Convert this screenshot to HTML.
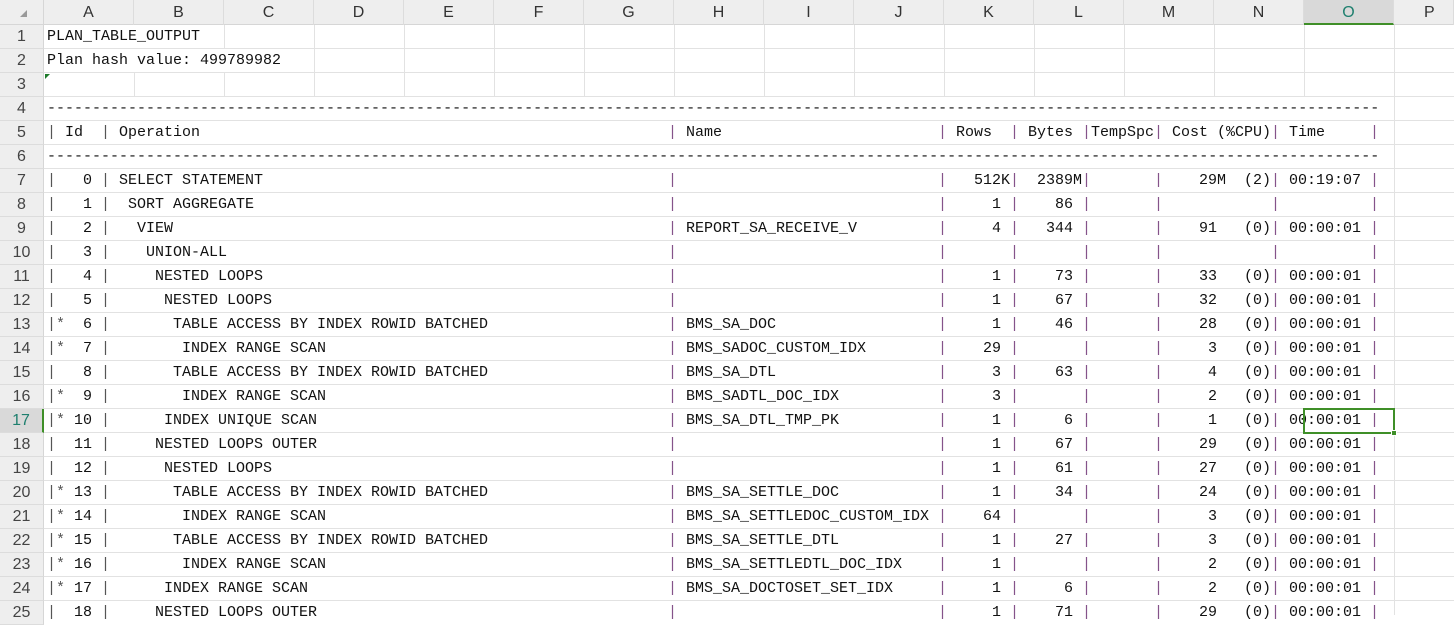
<!DOCTYPE html>
<html><head><meta charset="utf-8"><style>
*{margin:0;padding:0;box-sizing:border-box}
body{width:1454px;height:615px;overflow:hidden;background:#fff;position:relative;font-family:"Liberation Mono",monospace;font-size:15px;color:#111}
.hd{position:absolute;top:0;left:0;width:1454px;height:25px;background:#eeeeee;border-bottom:1px solid #d6d6d6}
.ch{position:absolute;top:0;height:25px;line-height:25px;text-align:center;font-family:"Liberation Sans",sans-serif;font-size:16px;color:#333;border-right:1px solid #dcdcdc}
.rh{position:absolute;left:0;width:44px;height:24px;line-height:24px;text-align:center;background:#eeeeee;font-family:"Liberation Sans",sans-serif;font-size:16px;color:#444;border-bottom:1px solid #dcdcdc;border-right:1px solid #d6d6d6}
.hl{position:absolute;left:44px;width:1410px;height:1px;background:#e2e2e2}
.vl{position:absolute;width:1px;background:#e2e2e2}
.r{position:absolute;left:0;width:1454px;height:24px;line-height:24px;white-space:pre}
.r span{position:absolute;top:0}
.p{color:#555}
.q{color:#85538a}
.ra{text-align:right}
</style></head><body>
<div class="hd"></div>
<div style="position:absolute;left:0;top:0;width:44px;height:25px;border-right:1px solid #d6d6d6"></div>
<div style="position:absolute;left:20px;top:10px;width:0;height:0;border-left:7px solid transparent;border-bottom:7px solid #999"></div>
<div class="ch" style="left:44px;width:90px">A</div>
<div class="ch" style="left:134px;width:90px">B</div>
<div class="ch" style="left:224px;width:90px">C</div>
<div class="ch" style="left:314px;width:90px">D</div>
<div class="ch" style="left:404px;width:90px">E</div>
<div class="ch" style="left:494px;width:90px">F</div>
<div class="ch" style="left:584px;width:90px">G</div>
<div class="ch" style="left:674px;width:90px">H</div>
<div class="ch" style="left:764px;width:90px">I</div>
<div class="ch" style="left:854px;width:90px">J</div>
<div class="ch" style="left:944px;width:90px">K</div>
<div class="ch" style="left:1034px;width:90px">L</div>
<div class="ch" style="left:1124px;width:90px">M</div>
<div class="ch" style="left:1214px;width:90px">N</div>
<div class="ch" style="left:1304px;width:90px;background:#d9d9d9;color:#1e7f6e;border-bottom:2px solid #3f8f28">O</div>
<div class="ch" style="left:1394px;width:60px;text-align:left;padding-left:30px">P</div>

<!-- row headers -->
<div class="rh" style="top:25px">1</div><div class="rh" style="top:49px">2</div><div class="rh" style="top:73px">3</div><div class="rh" style="top:97px">4</div><div class="rh" style="top:121px">5</div><div class="rh" style="top:145px">6</div><div class="rh" style="top:169px">7</div><div class="rh" style="top:193px">8</div><div class="rh" style="top:217px">9</div><div class="rh" style="top:241px">10</div><div class="rh" style="top:265px">11</div><div class="rh" style="top:289px">12</div><div class="rh" style="top:313px">13</div><div class="rh" style="top:337px">14</div><div class="rh" style="top:361px">15</div><div class="rh" style="top:385px">16</div><div class="rh" style="top:409px;background:#d9d9d9;color:#1e7f6e;border-right:2px solid #3f8f28">17</div><div class="rh" style="top:433px">18</div><div class="rh" style="top:457px">19</div><div class="rh" style="top:481px">20</div><div class="rh" style="top:505px">21</div><div class="rh" style="top:529px">22</div><div class="rh" style="top:553px">23</div><div class="rh" style="top:577px">24</div><div class="rh" style="top:601px">25</div>

<!-- horizontal gridlines -->
<div class="hl" style="top:48px"></div><div class="hl" style="top:72px"></div><div class="hl" style="top:96px"></div><div class="hl" style="top:120px"></div><div class="hl" style="top:144px"></div><div class="hl" style="top:168px"></div><div class="hl" style="top:192px"></div><div class="hl" style="top:216px"></div><div class="hl" style="top:240px"></div><div class="hl" style="top:264px"></div><div class="hl" style="top:288px"></div><div class="hl" style="top:312px"></div><div class="hl" style="top:336px"></div><div class="hl" style="top:360px"></div><div class="hl" style="top:384px"></div><div class="hl" style="top:408px"></div><div class="hl" style="top:432px"></div><div class="hl" style="top:456px"></div><div class="hl" style="top:480px"></div><div class="hl" style="top:504px"></div><div class="hl" style="top:528px"></div><div class="hl" style="top:552px"></div><div class="hl" style="top:576px"></div><div class="hl" style="top:600px"></div>

<!-- vertical gridlines rows 1-3 -->
<div class="vl" style="left:224px;top:25px;height:24px"></div>
<div class="vl" style="left:134px;top:73px;height:24px"></div>
<div class="vl" style="left:224px;top:73px;height:24px"></div>
<div class="vl" style="left:314px;top:25px;height:72px"></div>
<div class="vl" style="left:404px;top:25px;height:72px"></div>
<div class="vl" style="left:494px;top:25px;height:72px"></div>
<div class="vl" style="left:584px;top:25px;height:72px"></div>
<div class="vl" style="left:674px;top:25px;height:72px"></div>
<div class="vl" style="left:764px;top:25px;height:72px"></div>
<div class="vl" style="left:854px;top:25px;height:72px"></div>
<div class="vl" style="left:944px;top:25px;height:72px"></div>
<div class="vl" style="left:1034px;top:25px;height:72px"></div>
<div class="vl" style="left:1124px;top:25px;height:72px"></div>
<div class="vl" style="left:1214px;top:25px;height:72px"></div>
<div class="vl" style="left:1304px;top:25px;height:72px"></div>
<div class="vl" style="left:1394px;top:25px;height:590px"></div>
<div style="position:absolute;left:45px;top:74px;width:0;height:0;border-top:5px solid #1d7a2a;border-right:5px solid transparent"></div>

<div class="r" style="top:25px"><span style="left:47px">PLAN_TABLE_OUTPUT</span></div>
<div class="r" style="top:49px"><span style="left:47px">Plan hash value: 499789982</span></div>
<div class="r" style="top:97px"><span style="left:47px">----------------------------------------------------------------------------------------------------------------------------------------------------</span></div>
<div class="r" style="top:121px"><span class="p" style="left:47px">|</span><span style="left:65px">Id</span><span class="p" style="left:101px">|</span><span style="left:119px">Operation</span><span class="q" style="left:668px">|</span><span style="left:686px">Name</span><span class="q" style="left:938px">|</span><span style="left:956px">Rows</span><span class="q" style="left:1010px">|</span><span style="left:1028px">Bytes</span><span class="q" style="left:1082px">|</span><span style="left:1091px">TempSpc</span><span class="q" style="left:1154px">|</span><span style="left:1172px">Cost (%CPU)</span><span class="q" style="left:1271px">|</span><span style="left:1289px">Time</span><span class="q" style="left:1370px">|</span></div>
<div class="r" style="top:145px"><span style="left:47px">----------------------------------------------------------------------------------------------------------------------------------------------------</span></div>

<div id="rows"></div>
<!-- data rows -->
<div class="r" style="top:169px"><span class="p" style="left:47px">|</span><span class="ra" style="right:1362px">0</span><span class="p" style="left:101px">|</span><span style="left:119px">SELECT STATEMENT</span><span class="q" style="left:668px">|</span><span class="q" style="left:938px">|</span><span class="ra" style="right:444px">512K</span><span class="q" style="left:1010px">|</span><span class="ra" style="right:372px">2389M</span><span class="q" style="left:1082px">|</span><span class="q" style="left:1154px">|</span><span class="ra" style="right:228px">29M</span><span class="ra" style="right:183px">(2)</span><span class="q" style="left:1271px">|</span><span style="left:1289px">00:19:07</span><span class="q" style="left:1370px">|</span></div>
<div class="r" style="top:193px"><span class="p" style="left:47px">|</span><span class="ra" style="right:1362px">1</span><span class="p" style="left:101px">|</span><span style="left:128px">SORT AGGREGATE</span><span class="q" style="left:668px">|</span><span class="q" style="left:938px">|</span><span class="ra" style="right:453px">1</span><span class="q" style="left:1010px">|</span><span class="ra" style="right:381px">86</span><span class="q" style="left:1082px">|</span><span class="q" style="left:1154px">|</span><span class="q" style="left:1271px">|</span><span class="q" style="left:1370px">|</span></div>
<div class="r" style="top:217px"><span class="p" style="left:47px">|</span><span class="ra" style="right:1362px">2</span><span class="p" style="left:101px">|</span><span style="left:137px">VIEW</span><span class="q" style="left:668px">|</span><span style="left:686px">REPORT_SA_RECEIVE_V</span><span class="q" style="left:938px">|</span><span class="ra" style="right:453px">4</span><span class="q" style="left:1010px">|</span><span class="ra" style="right:381px">344</span><span class="q" style="left:1082px">|</span><span class="q" style="left:1154px">|</span><span class="ra" style="right:237px">91</span><span class="ra" style="right:183px">(0)</span><span class="q" style="left:1271px">|</span><span style="left:1289px">00:00:01</span><span class="q" style="left:1370px">|</span></div>
<div class="r" style="top:241px"><span class="p" style="left:47px">|</span><span class="ra" style="right:1362px">3</span><span class="p" style="left:101px">|</span><span style="left:146px">UNION-ALL</span><span class="q" style="left:668px">|</span><span class="q" style="left:938px">|</span><span class="q" style="left:1010px">|</span><span class="q" style="left:1082px">|</span><span class="q" style="left:1154px">|</span><span class="q" style="left:1271px">|</span><span class="q" style="left:1370px">|</span></div>
<div class="r" style="top:265px"><span class="p" style="left:47px">|</span><span class="ra" style="right:1362px">4</span><span class="p" style="left:101px">|</span><span style="left:155px">NESTED LOOPS</span><span class="q" style="left:668px">|</span><span class="q" style="left:938px">|</span><span class="ra" style="right:453px">1</span><span class="q" style="left:1010px">|</span><span class="ra" style="right:381px">73</span><span class="q" style="left:1082px">|</span><span class="q" style="left:1154px">|</span><span class="ra" style="right:237px">33</span><span class="ra" style="right:183px">(0)</span><span class="q" style="left:1271px">|</span><span style="left:1289px">00:00:01</span><span class="q" style="left:1370px">|</span></div>
<div class="r" style="top:289px"><span class="p" style="left:47px">|</span><span class="ra" style="right:1362px">5</span><span class="p" style="left:101px">|</span><span style="left:164px">NESTED LOOPS</span><span class="q" style="left:668px">|</span><span class="q" style="left:938px">|</span><span class="ra" style="right:453px">1</span><span class="q" style="left:1010px">|</span><span class="ra" style="right:381px">67</span><span class="q" style="left:1082px">|</span><span class="q" style="left:1154px">|</span><span class="ra" style="right:237px">32</span><span class="ra" style="right:183px">(0)</span><span class="q" style="left:1271px">|</span><span style="left:1289px">00:00:01</span><span class="q" style="left:1370px">|</span></div>
<div class="r" style="top:313px"><span class="p" style="left:47px">|*</span><span class="ra" style="right:1362px">6</span><span class="p" style="left:101px">|</span><span style="left:173px">TABLE ACCESS BY INDEX ROWID BATCHED</span><span class="q" style="left:668px">|</span><span style="left:686px">BMS_SA_DOC</span><span class="q" style="left:938px">|</span><span class="ra" style="right:453px">1</span><span class="q" style="left:1010px">|</span><span class="ra" style="right:381px">46</span><span class="q" style="left:1082px">|</span><span class="q" style="left:1154px">|</span><span class="ra" style="right:237px">28</span><span class="ra" style="right:183px">(0)</span><span class="q" style="left:1271px">|</span><span style="left:1289px">00:00:01</span><span class="q" style="left:1370px">|</span></div>
<div class="r" style="top:337px"><span class="p" style="left:47px">|*</span><span class="ra" style="right:1362px">7</span><span class="p" style="left:101px">|</span><span style="left:182px">INDEX RANGE SCAN</span><span class="q" style="left:668px">|</span><span style="left:686px">BMS_SADOC_CUSTOM_IDX</span><span class="q" style="left:938px">|</span><span class="ra" style="right:453px">29</span><span class="q" style="left:1010px">|</span><span class="q" style="left:1082px">|</span><span class="q" style="left:1154px">|</span><span class="ra" style="right:237px">3</span><span class="ra" style="right:183px">(0)</span><span class="q" style="left:1271px">|</span><span style="left:1289px">00:00:01</span><span class="q" style="left:1370px">|</span></div>
<div class="r" style="top:361px"><span class="p" style="left:47px">|</span><span class="ra" style="right:1362px">8</span><span class="p" style="left:101px">|</span><span style="left:173px">TABLE ACCESS BY INDEX ROWID BATCHED</span><span class="q" style="left:668px">|</span><span style="left:686px">BMS_SA_DTL</span><span class="q" style="left:938px">|</span><span class="ra" style="right:453px">3</span><span class="q" style="left:1010px">|</span><span class="ra" style="right:381px">63</span><span class="q" style="left:1082px">|</span><span class="q" style="left:1154px">|</span><span class="ra" style="right:237px">4</span><span class="ra" style="right:183px">(0)</span><span class="q" style="left:1271px">|</span><span style="left:1289px">00:00:01</span><span class="q" style="left:1370px">|</span></div>
<div class="r" style="top:385px"><span class="p" style="left:47px">|*</span><span class="ra" style="right:1362px">9</span><span class="p" style="left:101px">|</span><span style="left:182px">INDEX RANGE SCAN</span><span class="q" style="left:668px">|</span><span style="left:686px">BMS_SADTL_DOC_IDX</span><span class="q" style="left:938px">|</span><span class="ra" style="right:453px">3</span><span class="q" style="left:1010px">|</span><span class="q" style="left:1082px">|</span><span class="q" style="left:1154px">|</span><span class="ra" style="right:237px">2</span><span class="ra" style="right:183px">(0)</span><span class="q" style="left:1271px">|</span><span style="left:1289px">00:00:01</span><span class="q" style="left:1370px">|</span></div>
<div class="r" style="top:409px"><span class="p" style="left:47px">|*</span><span class="ra" style="right:1362px">10</span><span class="p" style="left:101px">|</span><span style="left:164px">INDEX UNIQUE SCAN</span><span class="q" style="left:668px">|</span><span style="left:686px">BMS_SA_DTL_TMP_PK</span><span class="q" style="left:938px">|</span><span class="ra" style="right:453px">1</span><span class="q" style="left:1010px">|</span><span class="ra" style="right:381px">6</span><span class="q" style="left:1082px">|</span><span class="q" style="left:1154px">|</span><span class="ra" style="right:237px">1</span><span class="ra" style="right:183px">(0)</span><span class="q" style="left:1271px">|</span><span style="left:1289px">00:00:01</span><span class="q" style="left:1370px">|</span></div>
<div class="r" style="top:433px"><span class="p" style="left:47px">|</span><span class="ra" style="right:1362px">11</span><span class="p" style="left:101px">|</span><span style="left:155px">NESTED LOOPS OUTER</span><span class="q" style="left:668px">|</span><span class="q" style="left:938px">|</span><span class="ra" style="right:453px">1</span><span class="q" style="left:1010px">|</span><span class="ra" style="right:381px">67</span><span class="q" style="left:1082px">|</span><span class="q" style="left:1154px">|</span><span class="ra" style="right:237px">29</span><span class="ra" style="right:183px">(0)</span><span class="q" style="left:1271px">|</span><span style="left:1289px">00:00:01</span><span class="q" style="left:1370px">|</span></div>
<div class="r" style="top:457px"><span class="p" style="left:47px">|</span><span class="ra" style="right:1362px">12</span><span class="p" style="left:101px">|</span><span style="left:164px">NESTED LOOPS</span><span class="q" style="left:668px">|</span><span class="q" style="left:938px">|</span><span class="ra" style="right:453px">1</span><span class="q" style="left:1010px">|</span><span class="ra" style="right:381px">61</span><span class="q" style="left:1082px">|</span><span class="q" style="left:1154px">|</span><span class="ra" style="right:237px">27</span><span class="ra" style="right:183px">(0)</span><span class="q" style="left:1271px">|</span><span style="left:1289px">00:00:01</span><span class="q" style="left:1370px">|</span></div>
<div class="r" style="top:481px"><span class="p" style="left:47px">|*</span><span class="ra" style="right:1362px">13</span><span class="p" style="left:101px">|</span><span style="left:173px">TABLE ACCESS BY INDEX ROWID BATCHED</span><span class="q" style="left:668px">|</span><span style="left:686px">BMS_SA_SETTLE_DOC</span><span class="q" style="left:938px">|</span><span class="ra" style="right:453px">1</span><span class="q" style="left:1010px">|</span><span class="ra" style="right:381px">34</span><span class="q" style="left:1082px">|</span><span class="q" style="left:1154px">|</span><span class="ra" style="right:237px">24</span><span class="ra" style="right:183px">(0)</span><span class="q" style="left:1271px">|</span><span style="left:1289px">00:00:01</span><span class="q" style="left:1370px">|</span></div>
<div class="r" style="top:505px"><span class="p" style="left:47px">|*</span><span class="ra" style="right:1362px">14</span><span class="p" style="left:101px">|</span><span style="left:182px">INDEX RANGE SCAN</span><span class="q" style="left:668px">|</span><span style="left:686px">BMS_SA_SETTLEDOC_CUSTOM_IDX</span><span class="q" style="left:938px">|</span><span class="ra" style="right:453px">64</span><span class="q" style="left:1010px">|</span><span class="q" style="left:1082px">|</span><span class="q" style="left:1154px">|</span><span class="ra" style="right:237px">3</span><span class="ra" style="right:183px">(0)</span><span class="q" style="left:1271px">|</span><span style="left:1289px">00:00:01</span><span class="q" style="left:1370px">|</span></div>
<div class="r" style="top:529px"><span class="p" style="left:47px">|*</span><span class="ra" style="right:1362px">15</span><span class="p" style="left:101px">|</span><span style="left:173px">TABLE ACCESS BY INDEX ROWID BATCHED</span><span class="q" style="left:668px">|</span><span style="left:686px">BMS_SA_SETTLE_DTL</span><span class="q" style="left:938px">|</span><span class="ra" style="right:453px">1</span><span class="q" style="left:1010px">|</span><span class="ra" style="right:381px">27</span><span class="q" style="left:1082px">|</span><span class="q" style="left:1154px">|</span><span class="ra" style="right:237px">3</span><span class="ra" style="right:183px">(0)</span><span class="q" style="left:1271px">|</span><span style="left:1289px">00:00:01</span><span class="q" style="left:1370px">|</span></div>
<div class="r" style="top:553px"><span class="p" style="left:47px">|*</span><span class="ra" style="right:1362px">16</span><span class="p" style="left:101px">|</span><span style="left:182px">INDEX RANGE SCAN</span><span class="q" style="left:668px">|</span><span style="left:686px">BMS_SA_SETTLEDTL_DOC_IDX</span><span class="q" style="left:938px">|</span><span class="ra" style="right:453px">1</span><span class="q" style="left:1010px">|</span><span class="q" style="left:1082px">|</span><span class="q" style="left:1154px">|</span><span class="ra" style="right:237px">2</span><span class="ra" style="right:183px">(0)</span><span class="q" style="left:1271px">|</span><span style="left:1289px">00:00:01</span><span class="q" style="left:1370px">|</span></div>
<div class="r" style="top:577px"><span class="p" style="left:47px">|*</span><span class="ra" style="right:1362px">17</span><span class="p" style="left:101px">|</span><span style="left:164px">INDEX RANGE SCAN</span><span class="q" style="left:668px">|</span><span style="left:686px">BMS_SA_DOCTOSET_SET_IDX</span><span class="q" style="left:938px">|</span><span class="ra" style="right:453px">1</span><span class="q" style="left:1010px">|</span><span class="ra" style="right:381px">6</span><span class="q" style="left:1082px">|</span><span class="q" style="left:1154px">|</span><span class="ra" style="right:237px">2</span><span class="ra" style="right:183px">(0)</span><span class="q" style="left:1271px">|</span><span style="left:1289px">00:00:01</span><span class="q" style="left:1370px">|</span></div>
<div class="r" style="top:601px"><span class="p" style="left:47px">|</span><span class="ra" style="right:1362px">18</span><span class="p" style="left:101px">|</span><span style="left:155px">NESTED LOOPS OUTER</span><span class="q" style="left:668px">|</span><span class="q" style="left:938px">|</span><span class="ra" style="right:453px">1</span><span class="q" style="left:1010px">|</span><span class="ra" style="right:381px">71</span><span class="q" style="left:1082px">|</span><span class="q" style="left:1154px">|</span><span class="ra" style="right:237px">29</span><span class="ra" style="right:183px">(0)</span><span class="q" style="left:1271px">|</span><span style="left:1289px">00:00:01</span><span class="q" style="left:1370px">|</span></div>

<!-- selected cell -->
<div style="position:absolute;left:1303px;top:408px;width:92px;height:26px;border:2px solid #3f8f28"></div>
<div style="position:absolute;left:1391px;top:430px;width:6px;height:6px;background:#3f8f28;border:1px solid #fff"></div>
</body></html>
